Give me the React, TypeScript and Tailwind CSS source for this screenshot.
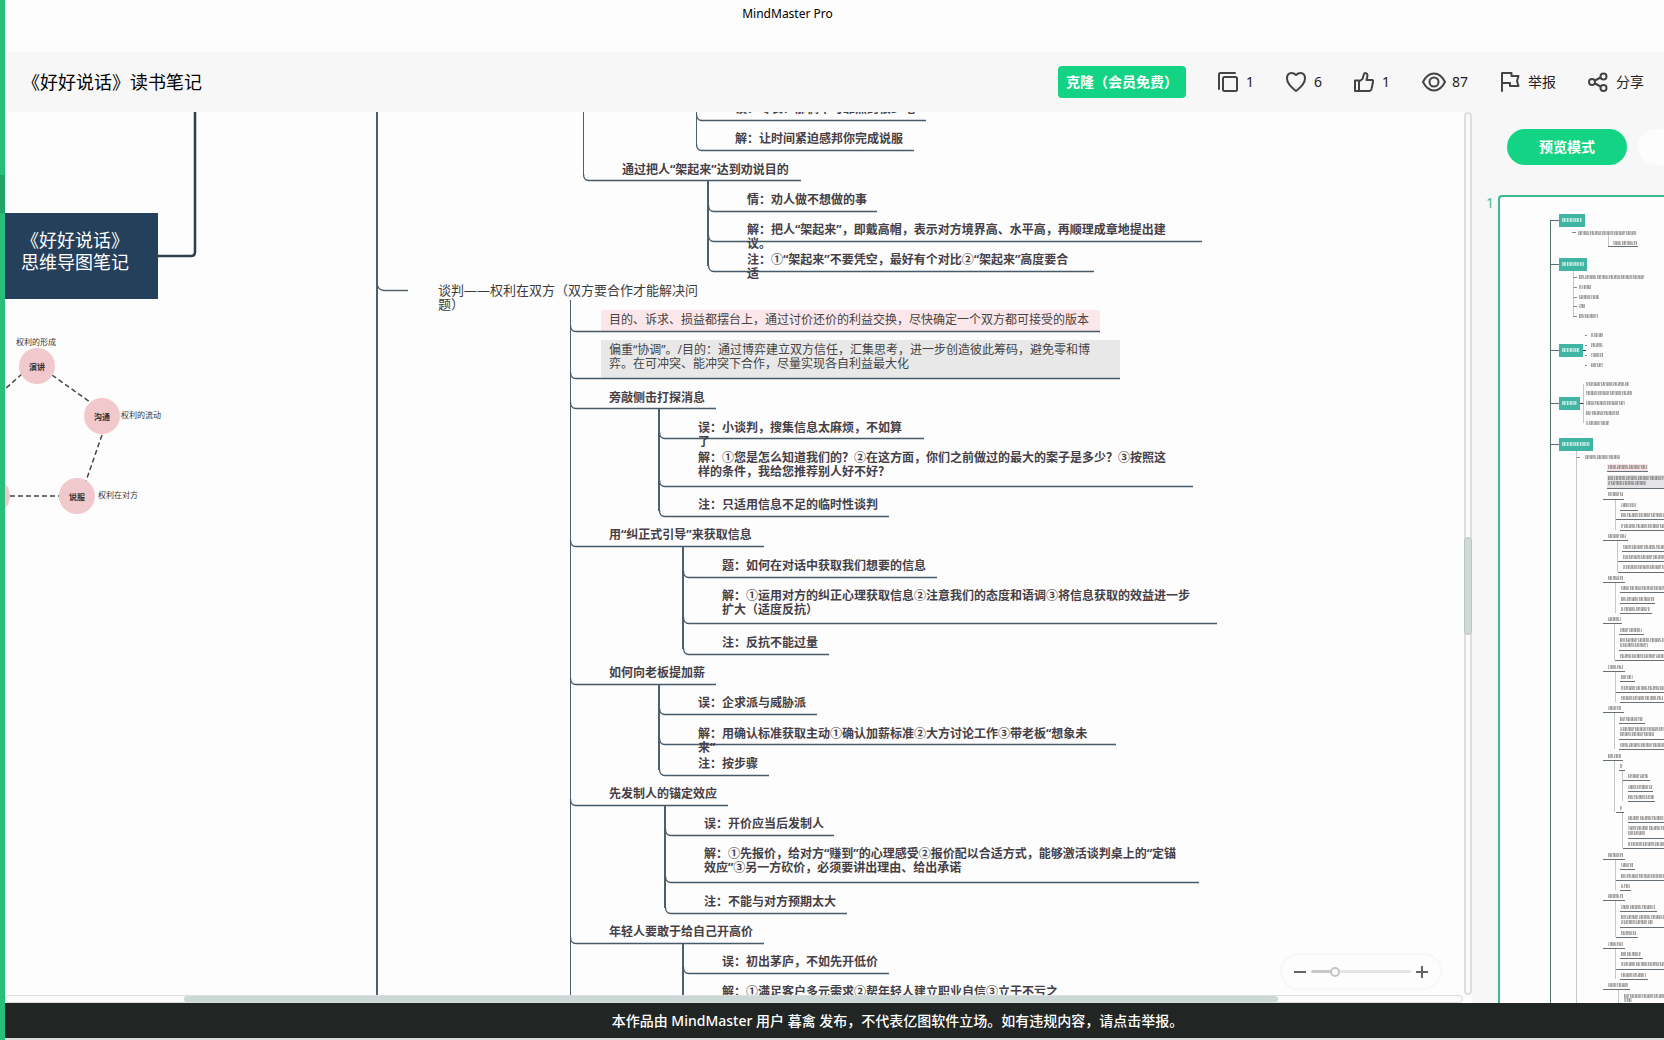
import { useState } from 'react';
import type { ReactNode } from 'react';

type MapNode = {
  text: string;
  x: number;
  top: number;
  // underline of the node: where it leaves its parent's trunk and where it ends
  trunk: number;
  line: number;
  end: number;
  fill?: 'pink' | 'gray';
};

// Part of the map that is scrolled into view
const VIEW = { x: 5, y: 112 };

const nodes: MapNode[] = [
  { text: '误：专长？那俩不可靠热的很少吧', x: 735, top: 101, trunk: 696, line: 120, end: 926 },
  { text: '解：让时间紧迫感邦你完成说服', x: 735, top: 131, trunk: 696, line: 150, end: 914 },
  { text: '通过把人“架起来”达到劝说目的', x: 622, top: 162, trunk: 583, line: 180, end: 801 },
  { text: '情：劝人做不想做的事', x: 747, top: 192, trunk: 708, line: 211, end: 877 },
  { text: '解：把人“架起来”，即戴高帽，表示对方境界高、水平高，再顺理成章地提出建\n议。', x: 747, top: 222, trunk: 708, line: 241, end: 1202 },
  { text: '注：①“架起来”不要凭空，最好有个对比②“架起来”高度要合\n适', x: 747, top: 252, trunk: 708, line: 271, end: 1094 },
  { text: '目的、诉求、损益都摆台上，通过讨价还价的利益交换，尽快确定一个双方都可接受的版本', x: 609, top: 312, trunk: 570, line: 331, end: 1100, fill: 'pink' },
  { text: '偏重“协调”。/目的：通过博弈建立双方信任，汇集思考，进一步创造彼此筹码，避免零和博\n弈。在可冲突、能冲突下合作，尽量实现各自利益最大化', x: 609, top: 342, trunk: 570, line: 378, end: 1120, fill: 'gray' },
  { text: '旁敲侧击打探消息', x: 609, top: 390, trunk: 570, line: 408, end: 716 },
  { text: '误：小谈判，搜集信息太麻烦，不如算\n了', x: 698, top: 420, trunk: 659, line: 438, end: 924 },
  { text: '解：①您是怎么知道我们的？②在这方面，你们之前做过的最大的案子是多少？③按照这\n样的条件，我给您推荐别人好不好？', x: 698, top: 450, trunk: 659, line: 486, end: 1193 },
  { text: '注：只适用信息不足的临时性谈判', x: 698, top: 497, trunk: 659, line: 516, end: 889 },
  { text: '用“纠正式引导”来获取信息', x: 609, top: 527, trunk: 570, line: 546, end: 764 },
  { text: '题：如何在对话中获取我们想要的信息', x: 722, top: 558, trunk: 683, line: 577, end: 937 },
  { text: '解：①运用对方的纠正心理获取信息②注意我们的态度和语调③将信息获取的效益进一步\n扩大（适度反抗）', x: 722, top: 588, trunk: 683, line: 623, end: 1217 },
  { text: '注：反抗不能过量', x: 722, top: 635, trunk: 683, line: 654, end: 829 },
  { text: '如何向老板提加薪', x: 609, top: 665, trunk: 570, line: 684, end: 716 },
  { text: '误：企求派与威胁派', x: 698, top: 695, trunk: 659, line: 714, end: 817 },
  { text: '解：用确认标准获取主动①确认加薪标准②大方讨论工作③带老板“想象未\n来”', x: 698, top: 726, trunk: 659, line: 744, end: 1116 },
  { text: '注：按步骤', x: 698, top: 756, trunk: 659, line: 775, end: 769 },
  { text: '先发制人的锚定效应', x: 609, top: 786, trunk: 570, line: 805, end: 728 },
  { text: '误：开价应当后发制人', x: 704, top: 816, trunk: 665, line: 835, end: 834 },
  { text: '解：①先报价，给对方“赚到”的心理感受②报价配以合适方式，能够激活谈判桌上的“定锚\n效应”③另一方砍价，必须要讲出理由、给出承诺', x: 704, top: 846, trunk: 665, line: 882, end: 1199 },
  { text: '注：不能与对方预期太大', x: 704, top: 894, trunk: 665, line: 913, end: 847 },
  { text: '年轻人要敢于给自己开高价', x: 609, top: 924, trunk: 570, line: 943, end: 764 },
  { text: '误：初出茅庐，不如先开低价', x: 722, top: 954, trunk: 683, line: 973, end: 889 },
  { text: '解：①满足客户多元需求②帮年轻人建立职业自信③立于不亏之', x: 722, top: 984, trunk: 683, line: 1003, end: 1100 },
];

// [x, from, to, width]
const trunks = [
  [377, 100, 1010, 2],
  [583, 100, 175, 1],
  [696, 100, 145, 1],
  [708, 181, 266, 2],
  [570, 300, 1010, 1],
  [659, 408, 511, 2],
  [683, 546, 649, 2],
  [659, 684, 770, 2],
  [665, 805, 908, 2],
  [683, 943, 1010, 2],
];

const ringLabels = [
  { text: '演讲', x: 29, y: 361, bold: true },
  { text: '沟通', x: 94, y: 411, bold: true },
  { text: '说服', x: 69, y: 491, bold: true },
  { text: '权利的形成', x: 16, y: 336 },
  { text: '权利的流动', x: 121, y: 409 },
  { text: '权利在对方', x: 98, y: 489 },
];

// [x, y, width] of every line of writing in the page thumbnail
const thumbTexts = [
  [1578, 233, 58], [1613, 243, 24],
  [1579, 277, 65], [1579, 287, 12], [1579, 297, 20], [1579, 306, 6], [1579, 316, 19],
  [1591, 335, 12], [1591, 345, 12], [1591, 355, 12], [1591, 365, 12],
  [1586, 384, 43], [1586, 393, 46], [1586, 403, 39], [1586, 413, 33], [1586, 423, 23],
  [1585, 457, 35], [1608, 467, 39], [1608, 478, 56], [1608, 483, 38],
  [1608, 494, 15], [1621, 505, 15], [1621, 515, 43], [1621, 526, 43],
  [1608, 536, 18], [1623, 547, 41], [1623, 557, 41], [1623, 567, 41],
  [1608, 578, 15], [1621, 588, 43], [1621, 599, 33], [1621, 609, 29],
  [1608, 619, 13], [1620, 630, 22], [1620, 640, 44], [1620, 645, 28], [1620, 656, 44],
  [1608, 667, 15], [1621, 677, 12], [1621, 688, 43], [1621, 698, 42],
  [1608, 708, 13], [1620, 719, 23], [1620, 729, 44], [1620, 734, 34], [1620, 745, 44],
  [1608, 756, 13], [1620, 766, 3], [1628, 776, 20], [1628, 787, 24], [1628, 797, 26],
  [1620, 808, 3], [1628, 818, 36], [1628, 828, 36], [1628, 833, 17], [1628, 844, 36],
  [1608, 855, 15], [1621, 865, 12], [1621, 876, 43], [1621, 886, 9],
  [1608, 896, 15], [1621, 907, 34], [1621, 917, 43], [1621, 922, 32], [1621, 933, 15],
  [1608, 944, 15], [1621, 954, 20], [1621, 964, 43], [1621, 975, 25],
  [1608, 985, 20], [1624, 996, 40], [1624, 1000, 8],
];

// Underlines under the thumbnail's texts: [x, y, end]
const thumbLines = [
  [1608, 246, 1638], [1607, 471, 1648], [1607, 488, 1664],
  [1603, 499, 1624], [1620, 510, 1638], [1616, 519, 1664], [1620, 530, 1664],
  [1603, 540, 1628], [1622, 551, 1664], [1618, 561, 1664], [1618, 572, 1664],
  [1603, 582, 1625], [1620, 592, 1664], [1620, 603, 1655], [1620, 613, 1652],
  [1603, 623, 1622], [1619, 634, 1644], [1619, 650, 1664], [1615, 660, 1664],
  [1603, 671, 1625], [1620, 681, 1635], [1616, 692, 1664], [1620, 702, 1664],
  [1603, 712, 1624], [1619, 723, 1645], [1619, 739, 1664], [1619, 749, 1664],
  [1603, 760, 1623], [1619, 770, 1625], [1623, 780, 1650], [1628, 791, 1653], [1628, 801, 1655],
  [1616, 812, 1624], [1628, 822, 1664], [1628, 838, 1664], [1623, 848, 1664],
  [1603, 859, 1625], [1620, 869, 1635], [1616, 880, 1664], [1620, 890, 1631],
  [1603, 900, 1625], [1620, 911, 1657], [1620, 927, 1664], [1616, 937, 1638],
  [1603, 948, 1625], [1620, 958, 1643], [1616, 969, 1664], [1620, 979, 1648],
  [1603, 989, 1630],
];

// [x, from, to]
const thumbTrunks = [
  [1608, 236, 246], [1573, 271, 316], [1583, 384, 423], [1576, 451, 1003],
  [1615, 499, 530], [1617, 540, 572], [1615, 582, 613], [1614, 623, 660], [1615, 671, 702],
  [1614, 712, 749], [1614, 760, 812], [1622, 770, 801], [1622, 812, 848],
  [1615, 859, 890], [1615, 900, 937], [1615, 948, 979], [1618, 989, 1003],
];

// [x, y, width]
const thumbBoxes = [
  [1559, 214, 26], [1559, 258, 28], [1559, 344, 24], [1559, 397, 21], [1559, 438, 34],
];

function Connectors() {
  return (
    <svg className="absolute inset-0 h-full w-full" fill="none">
      <g transform={`translate(${-VIEW.x} ${-VIEW.y})`}>
        <path d="M157 256H191Q195 256 195 252V100" stroke="#2b3f4c" strokeWidth="2.5" />
        <path d="M377 284Q378 290 384 290.500H408" stroke="#53656f" strokeWidth="1.500" />
        {trunks.map(([x, from, to, width]) => (
          <path key={`${x}-${from}`} d={`M${width === 1 ? x + 0.5 : x} ${from}V${to}`} stroke="#4d606c" strokeWidth={width} />
        ))}
        {nodes.map((n) => (
          <path
            key={n.text}
            d={`M${n.trunk + 0.5} ${n.line - 6}Q${n.trunk + 0.5} ${n.line + 0.5} ${n.trunk + 6} ${n.line + 0.5}H${n.end}`}
            stroke="#465a6a"
            strokeWidth="1.3"
          />
        ))}
        <g stroke="#4a4447" strokeWidth="1.5" strokeDasharray="5 3">
          <path d="M22 374L5 389M52 375L90 402M102 435L86 481M10 496H60" />
        </g>
        <g fill="#f1c8cc">
          <circle cx="37" cy="366" r="18" />
          <circle cx="102" cy="416" r="18" />
          <circle cx="77" cy="496" r="18" />
          <circle cx="-8" cy="496" r="18" />
        </g>
      </g>
    </svg>
  );
}

function Thumbnail() {
  return (
    <svg className="block h-[806px] w-[164px]" viewBox="1500 197 164 806" fill="none">
      <path d="M1607 464h41v7h-41z" fill="#f8e4e6" />
      <path d="M1607 475h57v13h-57z" fill="#e4e4e6" />
      <path d="M1550.500 220V1003M1550 220.500h9M1550 264.500h9M1550 350.500h9M1550 403.500h9M1550 444.500h9" stroke="#54706f" />
      <path d="M1583 350.500h3M1580 403.500h4" stroke="#333" />
      <path d="M1572 232.500h4M1573 277.500h4M1573 287.500h4M1573 297.500h4M1573 306.500h4M1573 316.500h4M1585 335.500h2M1585 345.500h2M1585 355.500h2M1585 365.500h2M1576 457.500h4" stroke="#888" />
      {thumbTrunks.map(([x, from, to]) => (
        <path key={`${x}-${from}`} d={`M${x + 0.5} ${from}V${to}`} stroke="#a9b1b4" strokeWidth="0.7" />
      ))}
      {thumbLines.map(([x, y, end]) => (
        <path key={y} d={`M${x} ${y + 0.5}H${end}`} stroke="#53606a" strokeWidth="0.9" />
      ))}
      {thumbTexts.map(([x, y, width], i) => (
        <g key={y} stroke="#5a5a5a">
          <path
            d={`M${x} ${y}h${width}`}
            strokeWidth="4"
            strokeDasharray="0.8 0.9 1.6 0.4 0.5 1.1 2.2 0.5 0.7 0.6 1.3 1.4"
            strokeDashoffset={i * 3}
            opacity="0.5"
          />
          <path d={`M${x} ${y - 1}h${width}`} strokeWidth="1" strokeDasharray="5 1 3 2" strokeDashoffset={i * 2} opacity="0.35" />
          <path d={`M${x} ${y + 1}h${width}`} strokeWidth="1" strokeDasharray="4 2 7 1" strokeDashoffset={i * 5} opacity="0.35" />
        </g>
      ))}
      {thumbBoxes.map(([x, y, width]) => (
        <g key={y}>
          <path d={`M${x} ${y}h${width}v13h-${width}z`} fill="#41b5a3" />
          <path
            d={`M${x + 3} ${y + 6}h${width - 6}`}
            stroke="#eefaf7"
            strokeWidth="4"
            strokeDasharray="0.8 0.6 1.7 0.4 0.5 0.8 1.3 0.5"
            opacity="0.8"
          />
        </g>
      ))}
    </svg>
  );
}

function Icon({ children, wide }: { children: ReactNode; wide?: boolean }) {
  return (
    <svg
      viewBox={wide ? '0 0 24 20' : '0 0 20 20'}
      className={wide ? 'h-5 w-6' : 'h-5 w-5'}
      fill="none"
      stroke="#444"
      strokeWidth="2"
      strokeLinejoin="round"
      strokeLinecap="round"
    >
      {children}
    </svg>
  );
}

function Action({ icon, label, title }: { icon: ReactNode; label: string; title: string }) {
  return (
    <button type="button" title={title} className="flex items-center gap-2 text-sm text-[#222]">
      {icon}
      {label}
    </button>
  );
}

function Header() {
  return (
    <header className="ml-[3px] flex h-[60px] shrink-0 items-center justify-between bg-[#f7f7f7] pr-5 pl-[14px]">
      <h1 className="text-lg text-black">《好好说话》读书笔记</h1>
      <div className="flex items-center gap-8">
        <button type="button" className="h-8 w-32 rounded bg-[#13d484] text-sm font-bold whitespace-nowrap text-white">
          克隆（会员免费）
        </button>
        <Action
          title="克隆"
          label="1"
          icon={
            <Icon>
              <rect x="5" y="5" width="14" height="14" rx="1.5" />
              <path d="M1 17V2.500Q1 1 2.500 1H17" />
            </Icon>
          }
        />
        <Action
          title="喜欢"
          label="6"
          icon={
            <Icon>
              <path d="M10 19C6 16 1 12 1 6.500C1 3 3 1 5.500 1C7.500 1 9 2 10 3C11 2 12.500 1 14.500 1C17 1 19 3 19 6.500C19 12 14 16 10 19Z" />
            </Icon>
          }
        />
        <Action
          title="点赞"
          label="1"
          icon={
            <Icon>
              <path d="M1 8.500H5V19H1ZM5 9.500L8.500 7L10 2Q10.500 .8 12 1.200Q13.500 1.500 13.500 3.500L12.500 8H18Q19.500 8 19 10L17.500 17Q17 19 15.500 19H5" />
            </Icon>
          }
        />
        <button type="button" title="浏览" className="flex items-center gap-1.5 text-sm text-[#222]">
          <Icon wide>
            <path d="M1 10C4 4 8 1.500 12 1.500S20 4 23 10C20 16 16 18.500 12 18.500S4 16 1 10Z" />
            <circle cx="12" cy="10" r="4.5" />
          </Icon>
          87
        </button>
        <Action
          title="举报"
          label="举报"
          icon={
            <Icon>
              <path d="M2 19V1H11.500V4H18.500L17 9L18.500 14H10V11H2" />
            </Icon>
          }
        />
        <Action
          title="分享"
          label="分享"
          icon={
            <Icon>
              <circle cx="4" cy="10" r="3" />
              <circle cx="15.500" cy="4.500" r="3" />
              <circle cx="15.500" cy="16" r="3" />
              <path d="M7 8.500L12.500 5.500M7 11.500L12.500 14.500" />
            </Icon>
          }
        />
      </div>
    </header>
  );
}

function ZoomControl() {
  const [zoom, setZoom] = useState(21);

  return (
    <div className="absolute right-[22px] bottom-[5px] flex h-[37px] w-[162px] items-center justify-center gap-[5px] rounded-full border-2 border-[#f7f7f7] bg-[#fdfdfd]">
      <button type="button" aria-label="缩小" onClick={() => setZoom(Math.max(0, zoom - 5))}>
        <svg viewBox="0 0 12 12" className="h-3 w-3" stroke="#666" strokeWidth="2">
          <path d="M0 6H12" />
        </svg>
      </button>
      <input
        type="range"
        aria-label="缩放"
        value={zoom}
        onChange={(e) => setZoom(Number(e.target.value))}
        className="h-[3px] w-[100px] appearance-none rounded-full bg-[#e5e5e5] [&::-webkit-slider-thumb]:h-[10px] [&::-webkit-slider-thumb]:w-[10px] [&::-webkit-slider-thumb]:appearance-none [&::-webkit-slider-thumb]:rounded-full [&::-webkit-slider-thumb]:border-2 [&::-webkit-slider-thumb]:border-[#c4c4c4] [&::-webkit-slider-thumb]:bg-white"
        style={{ backgroundImage: `linear-gradient(to right, #c8c8c8 ${zoom}%, transparent ${zoom}%)` }}
      />
      <button type="button" aria-label="放大" onClick={() => setZoom(Math.min(100, zoom + 5))}>
        <svg viewBox="0 0 12 12" className="h-3 w-3" stroke="#666" strokeWidth="2">
          <path d="M0 6H12M6 0V12" />
        </svg>
      </button>
    </div>
  );
}

function Canvas() {
  return (
    <main className="relative min-w-0 flex-1 overflow-hidden bg-[#fdfdfd]">
      {nodes
        .filter((n) => n.fill)
        .map((n) => (
          <div
            key={n.text}
            className={`absolute ${n.fill === 'pink' ? 'bg-[#fbe7ea]' : 'bg-[#e8e8e8]'}`}
            style={{ left: 601 - VIEW.x, top: n.top - 2 - VIEW.y, width: n.end - 601, height: n.line - n.top + 2 }}
          />
        ))}
      <Connectors />
      <div className="absolute top-[101px] left-0 h-[86px] w-[153px] bg-[#25405a] pt-4 pl-4 text-lg leading-[22px] text-white">
        《好好说话》
        <br />
        思维导图笔记
      </div>
      <p className="absolute top-[171px] left-[433px] text-[13px] leading-[14px] whitespace-nowrap text-[#3c3c3c]">
        谈判——权利在双方（双方要合作才能解决问
        <br />
        题）
      </p>
      {nodes.map((n) => (
        <p
          key={n.text}
          className={`absolute pt-px text-xs leading-[14px] whitespace-pre ${n.fill ? 'text-[#444]' : 'font-bold text-[#463f46]'}`}
          style={{ left: n.x - VIEW.x, top: n.top - VIEW.y }}
        >
          {n.text}
        </p>
      ))}
      {ringLabels.map((l) => (
        <span
          key={l.text}
          className={`absolute text-[8px] leading-3 whitespace-nowrap text-[#333] ${l.bold ? 'font-bold' : ''}`}
          style={{ left: l.x - VIEW.x, top: l.y - VIEW.y }}
        >
          {l.text}
        </span>
      ))}
      <ZoomControl />
    </main>
  );
}

function PreviewPanel() {
  return (
    <aside className="flex w-48 shrink-0 flex-col overflow-hidden bg-[#f7f7f7] pt-[17px]">
      <div className="flex shrink-0 gap-[11px] pl-[35px]">
        <button type="button" className="h-9 w-[120px] shrink-0 rounded-full bg-[#13d484] text-sm font-bold text-white">
          预览模式
        </button>
        <button type="button" aria-label="大纲模式" className="h-9 w-[120px] shrink-0 rounded-full bg-[#fdfdfd]" />
      </div>
      <div className="mt-[30px] flex min-h-0 flex-1">
        <span className="w-[26px] shrink-0 pr-1 text-right text-sm leading-4 text-[#4fba80]">1</span>
        <div className="min-w-0 flex-1 overflow-hidden rounded-tl-sm border-t-2 border-l-2 border-[#3dba8b] bg-[#fdfdfd]">
          <Thumbnail />
        </div>
      </div>
    </aside>
  );
}

export default function App() {
  return (
    <div className="flex h-screen overflow-hidden bg-[#fdfdfd] font-['Noto_Sans','Noto_Sans_CJK_SC',sans-serif]">
      <div className="w-[5px] shrink-0 bg-[#28bf7c] pt-[175px]">
        <div className="h-[38px] bg-[#22a568]" />
      </div>
      <div className="flex min-w-0 flex-1 flex-col">
        <div className="h-[52px] shrink-0 pt-1 pr-[94px] text-center text-xs leading-5 text-black">MindMaster Pro</div>
        <Header />
        <div className="flex min-h-0 flex-1">
          <div className="flex min-w-0 flex-1 flex-col">
            <div className="flex min-h-0 flex-1">
              <Canvas />
              <div className="w-2 shrink-0 rounded-full border-2 border-[#dedede] bg-[#fafafa] pt-[423px]">
                <div className="-mx-0.5 h-[98px] rounded-sm border border-[#b9c5c4] bg-[#cfdad9]" />
              </div>
            </div>
            <div className="mr-[9px] h-2 shrink-0 rounded-full border border-[#dcdcdc] bg-[#fafafa] pl-[178px]">
              <div className="h-full w-[1094px] rounded-sm bg-[#ccd8d6]" />
            </div>
          </div>
          <PreviewPanel />
        </div>
        <footer className="flex h-[37px] shrink-0 items-center justify-center border-b-2 border-[#dcdcdc] bg-[#212625] pl-[126px] text-sm font-medium text-white">
          本作品由 MindMaster 用户 暮禽 发布，不代表亿图软件立场。如有违规内容，请点击举报。
        </footer>
      </div>
    </div>
  );
}
